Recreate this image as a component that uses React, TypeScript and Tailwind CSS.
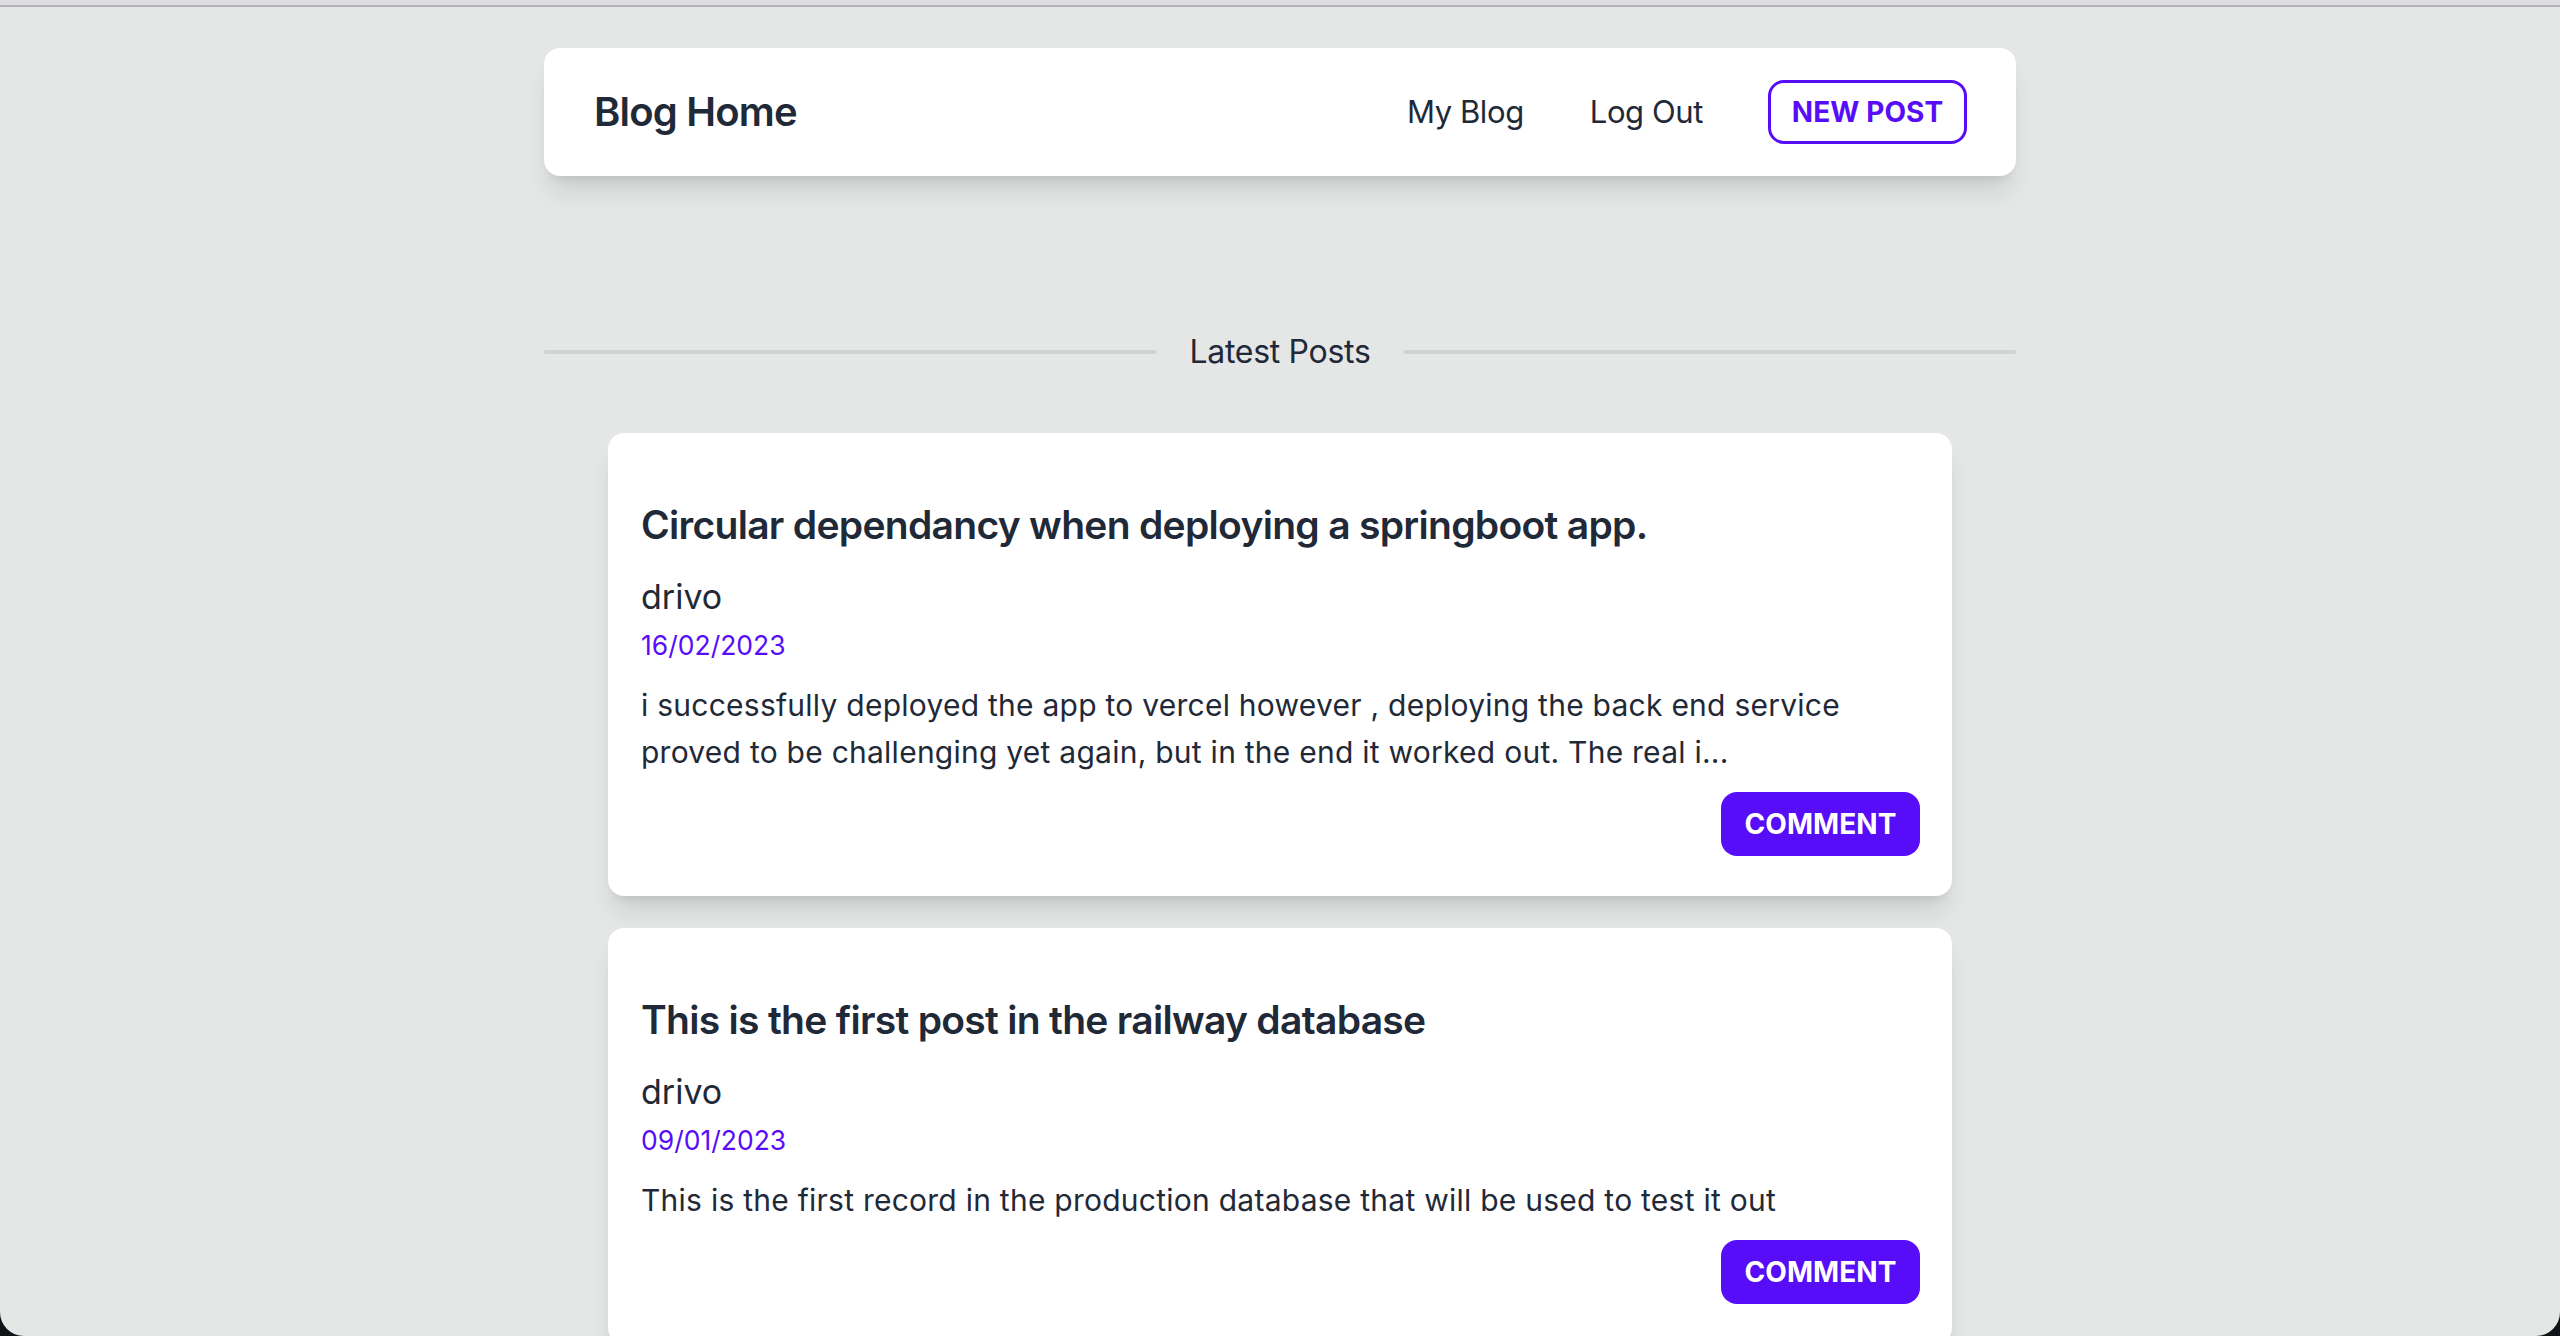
import React from "react";

type Post = { title: string; author: string; date: string; body: React.ReactNode };

const posts: Post[] = [
  {
    title: "Circular dependancy when deploying a springboot app.",
    author: "drivo",
    date: "16/02/2023",
    body: (
      <>
        i successfully deployed the app to vercel however , deploying the back end service
        <br />
        proved to be challenging yet again, but in the end it worked out. The real i...
      </>
    ),
  },
  {
    title: "This is the first post in the railway database",
    author: "drivo",
    date: "09/01/2023",
    body: <>This is the first record in the production database that will be used to test it out</>,
  },
];

function PostCard({ post }: { post: Post }) {
  return (
    <div className="w-[1344px] mx-auto bg-white rounded-[16px] shadow-xl px-[33px] pt-[64px] pb-[40px] flex flex-col">
      <h2 className="text-[39px] leading-[56px] font-semibold text-[#1f2937] tracking-[-0.7px]">{post.title}</h2>
      <div className="mt-[22px] text-[34px] leading-[44px] text-[#1f2937]">{post.author}</div>
      <div className="mt-[8px] text-[26.5px] leading-[36px] text-[#570df8]">{post.date}</div>
      <p className="mt-[19px] text-[30px] leading-[47px] text-[#1f2937] tracking-[0.25px]">{post.body}</p>
      <div className="mt-[16px] flex justify-end mr-[-1px]">
        <button className="h-[64px] w-[199px] rounded-[16px] bg-[#570df8] text-white text-[28px] font-bold tracking-[0.1px]">
          COMMENT
        </button>
      </div>
    </div>
  );
}

export default function App() {
  return (
    <div
      className="min-h-screen bg-[#e5e6e6] pb-[60px] overflow-hidden"
      style={{ fontFamily: "Inter, 'Noto Sans', sans-serif" }}
    >
      <div className="h-[5px] bg-[#dcdce1]" />
      <div className="h-[2px] bg-[#b3b3b8]" />

      <nav className="mt-[41px] w-[1472px] mx-auto h-[128px] bg-white rounded-[16px] shadow-xl pl-[50px] pr-[49px] flex items-center justify-between">
        <div className="text-[40px] font-semibold text-[#1f2937] tracking-[-0.8px]">Blog Home</div>
        <div className="flex items-center">
          <a className="text-[31px] text-[#1f2937] tracking-[-0.4px]">My Blog</a>
          <a className="ml-[66px] text-[31px] text-[#1f2937] tracking-[-0.4px]">Log Out</a>
          <button className="ml-[65px] h-[64px] w-[199px] rounded-[16px] border-[3px] border-[#570df8] text-[#570df8] text-[28px] font-bold tracking-[0.1px]">
            NEW POST
          </button>
        </div>
      </nav>

      <div className="mt-[160px] w-[1472px] mx-auto h-[32px] flex items-center gap-[32px]">
        <div className="flex-1 h-[4px] bg-[#d1d3d3] rounded-full" />
        <div className="text-[32px] text-[#1f2937] tracking-[-0.3px]">Latest Posts</div>
        <div className="flex-1 h-[4px] bg-[#d1d3d3] rounded-full" />
      </div>

      <div className="mt-[65px] flex flex-col gap-[32px]">
        {posts.map((p, i) => (
          <PostCard key={i} post={p} />
        ))}
      </div>

      <div className="fixed left-0 bottom-0 w-[24px] h-[24px] overflow-hidden pointer-events-none">
        <div className="w-[48px] h-[48px] -mt-[24px] rounded-bl-[24px] shadow-[0_0_0_30px_#111318]" />
      </div>
      <div className="fixed right-0 bottom-0 w-[24px] h-[24px] overflow-hidden pointer-events-none">
        <div className="w-[48px] h-[48px] -mt-[24px] -ml-[24px] rounded-br-[24px] shadow-[0_0_0_30px_#111318]" />
      </div>
    </div>
  );
}
